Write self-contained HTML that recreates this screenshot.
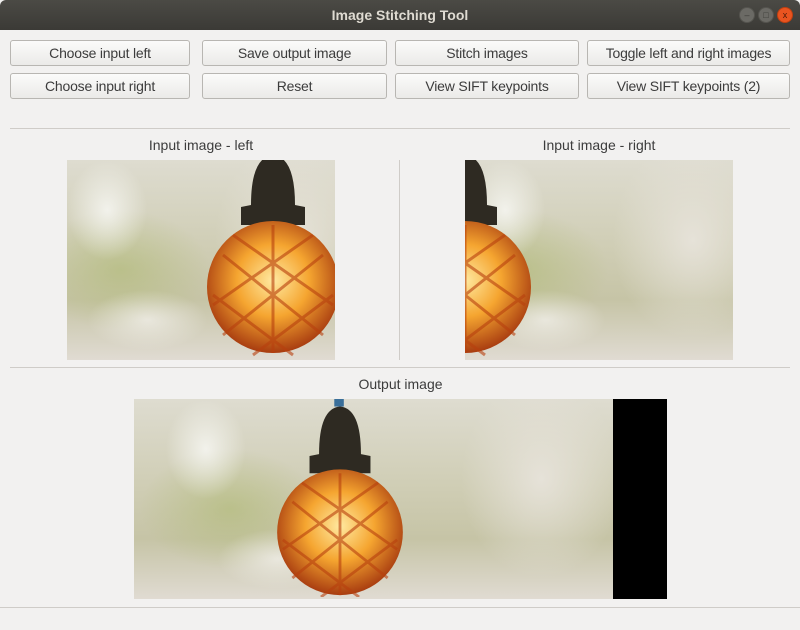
<!DOCTYPE html>
<html><head><style>
*{margin:0;padding:0;box-sizing:border-box}
body{width:800px;height:630px;background:#f2f1f0;font-family:"Liberation Sans","DejaVu Sans",sans-serif;position:relative;overflow:hidden;color:#3c3c3c}
.title{position:absolute;left:0;top:0;width:800px;height:30px;background:linear-gradient(#4b4a45,#3b3a36);border-radius:6px 6px 0 0;color:#dfdbd2;font-weight:bold;font-size:14px;text-align:center;line-height:30px}
.wb{position:absolute;top:7px;width:16px;height:16px;border-radius:50%;background:#6b6a65;border:1px solid #55544f;font-size:9px;line-height:14px;text-align:center;color:#3b3a36}
.btn{position:absolute;height:26px;border:1px solid #b8b6b2;border-radius:3px;background:linear-gradient(#fbfbfa,#ebeae8);font-size:14px;text-align:center;line-height:24px;color:#3c3c3c;letter-spacing:-0.2px}
.hl{position:absolute;left:10px;width:780px;height:1px;background:#cfccc8}
.lbl{position:absolute;font-size:14px;text-align:center}
.img{position:absolute;overflow:hidden;background:
radial-gradient(ellipse 40px 50px at 15% 25%,rgba(245,245,240,.9),transparent),
radial-gradient(ellipse 60px 30px at 30% 80%,rgba(240,238,232,.8),transparent),
radial-gradient(ellipse 90px 60px at 20% 55%,rgba(175,185,115,.6),transparent),
radial-gradient(ellipse 80px 100px at 85% 40%,rgba(232,228,220,.9),transparent),
linear-gradient(180deg,#dedcd0 0%,#cfcdb4 45%,#c6c4a6 70%,#e0dbd2 100%)}
</style></head><body>
<svg width="0" height="0" style="position:absolute"><defs>
<radialGradient id="g" cx="50%" cy="45%" r="55%"><stop offset="0" stop-color="#ffe9a0"/><stop offset=".5" stop-color="#f5a530"/><stop offset="1" stop-color="#a83c10"/></radialGradient>
<symbol id="lamp" viewBox="0 0 140 210">
<rect x="64" y="0" width="10" height="10" fill="#3a6f9a"/>
<path d="M48 60 Q48 12 70 10 Q92 12 92 60 L102 62 L102 80 L38 80 L38 62 Z" fill="#2e2a22"/>
<circle cx="70" cy="142" r="66" fill="url(#g)"/>
<path d="M20 110 L120 190 M30 90 L130 160 M10 150 L90 210 M120 110 L20 190 M110 90 L10 160 M130 150 L50 210 M70 80 L70 208" stroke="#b8400e" stroke-width="3" opacity=".6"/>
</symbol></defs></svg>
<div class="title">Image Stitching Tool</div>
<div class="wb" style="left:739px">–</div><div class="wb" style="left:758px">□</div><div class="wb" style="left:777px;background:#e95420;border-color:#c04010;color:#4a1a08">x</div>
<div class="btn" style="left:10px;top:40px;width:180px">Choose input left</div>
<div class="btn" style="left:202px;top:40px;width:185px">Save output image</div>
<div class="btn" style="left:395px;top:40px;width:184px">Stitch images</div>
<div class="btn" style="left:587px;top:40px;width:203px">Toggle left and right images</div>
<div class="btn" style="left:10px;top:73px;width:180px">Choose input right</div>
<div class="btn" style="left:202px;top:73px;width:185px">Reset</div>
<div class="btn" style="left:395px;top:73px;width:184px">View SIFT keypoints</div>
<div class="btn" style="left:587px;top:73px;width:203px">View SIFT keypoints (2)</div>
<div class="hl" style="top:128px"></div>
<div class="lbl" style="left:67px;width:268px;top:137px">Input image - left</div>
<div class="lbl" style="left:465px;width:268px;top:137px">Input image - right</div>
<div class="img" style="left:67px;top:160px;width:268px;height:200px"><svg style="position:absolute;left:136px;top:-20px" width="140" height="220"><use href="#lamp"/></svg></div>
<div style="position:absolute;left:399px;top:160px;width:1px;height:200px;background:#cfccc8"></div>
<div class="img" style="left:465px;top:160px;width:268px;height:200px"><svg style="position:absolute;left:-70px;top:-20px" width="140" height="220"><use href="#lamp"/></svg></div>
<div class="hl" style="top:367px"></div>
<div class="lbl" style="left:134px;width:533px;top:376px">Output image</div>
<div class="img" style="left:134px;top:399px;width:479px;height:200px"><svg style="position:absolute;left:136px;top:-2px" width="140" height="200"><use href="#lamp"/></svg></div>
<div style="position:absolute;left:613px;top:399px;width:54px;height:200px;background:#000"></div>
<div class="hl" style="top:607px;left:0;width:800px"></div>
</body></html>
